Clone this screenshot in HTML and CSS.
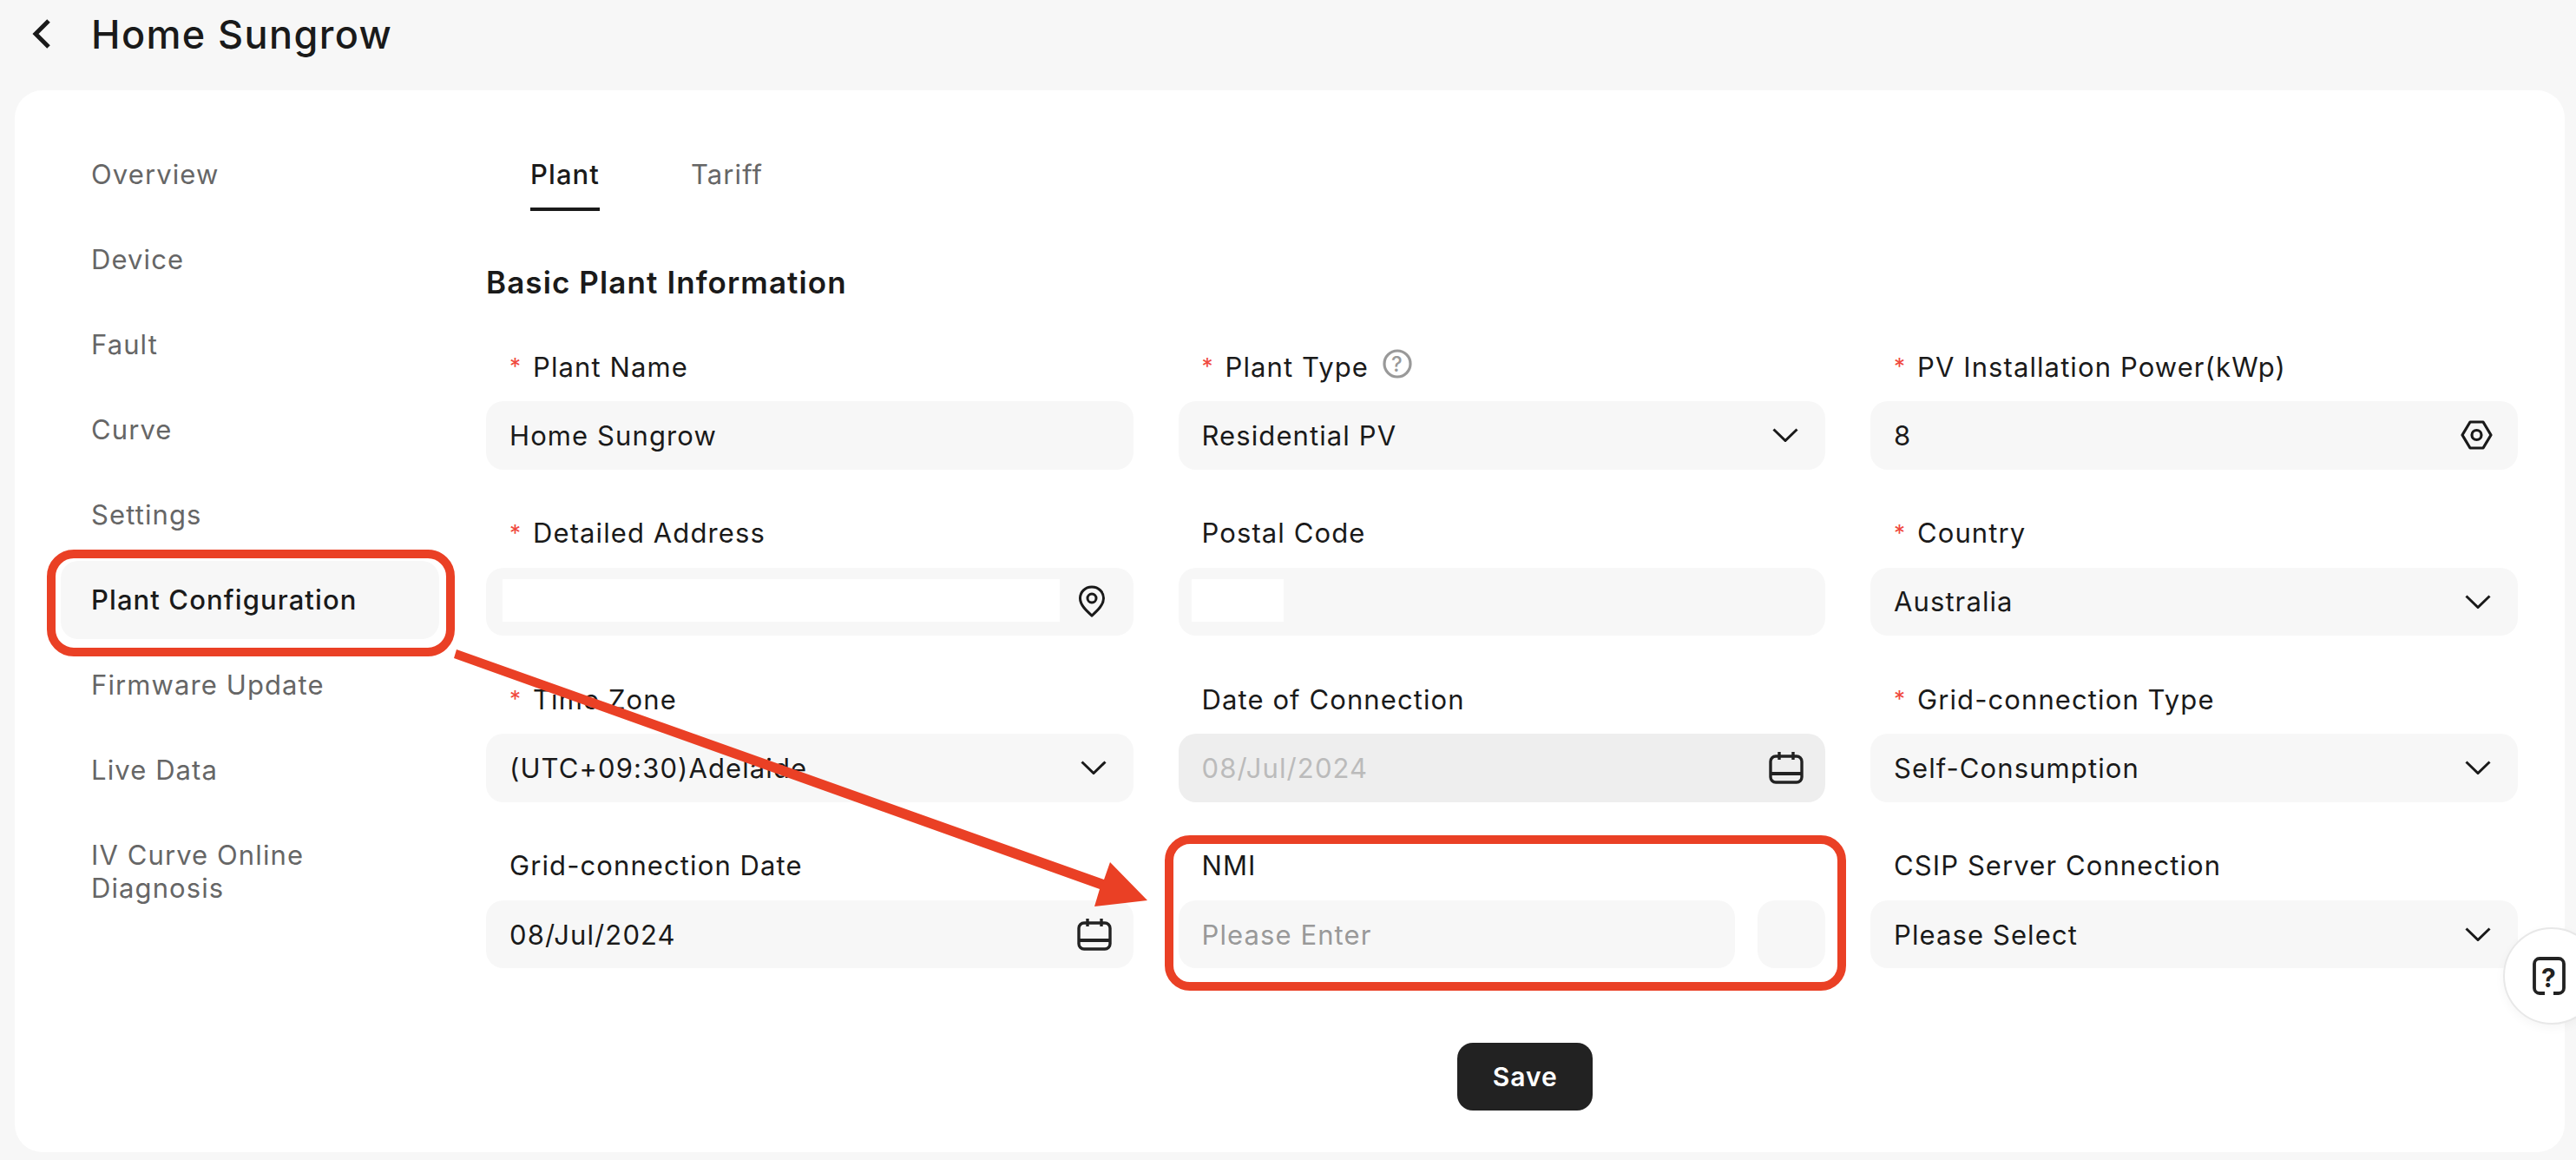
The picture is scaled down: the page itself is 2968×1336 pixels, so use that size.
FILE: index.html
```html
<!DOCTYPE html>
<html lang="en">
<head>
<meta charset="utf-8">
<title>Home Sungrow</title>
<link rel="stylesheet" href="styles.css">
</head>
<body>
<header class="topbar">
  <svg class="back" width="22" height="34" viewBox="0 0 22 34"><path d="M19 2 4 17l15 15" fill="none" stroke="#1a1a1a" stroke-width="5"/></svg>
  <h1 class="page-title">Home Sungrow</h1>
</header>
<main class="card">
  <nav class="sidebar">
    <a class="nav-item">Overview</a>
    <a class="nav-item">Device</a>
    <a class="nav-item">Fault</a>
    <a class="nav-item">Curve</a>
    <a class="nav-item">Settings</a>
    <a class="nav-item active">Plant Configuration</a>
    <a class="nav-item">Firmware Update</a>
    <a class="nav-item">Live Data</a>
    <a class="nav-item tall">IV Curve Online Diagnosis</a>
  </nav>
  <section class="content">
    <div class="tabs">
      <span class="tab selected">Plant</span>
      <span class="tab">Tariff</span>
    </div>
    <h2 class="section-title">Basic Plant Information</h2>
    <div class="form-grid">
      <div class="field">
        <label class="label"><i class="req">*</i>Plant Name</label>
        <div class="control"><span class="value">Home Sungrow</span></div>
      </div>
      <div class="field">
        <label class="label"><i class="req">*</i>Plant Type
          <svg class="hint" width="34" height="34" viewBox="0 0 34 34"><circle cx="17" cy="17" r="15" fill="none" stroke="#999" stroke-width="3.200"/><text x="17" y="25.500" text-anchor="middle" class="hint-mark">?</text></svg>
        </label>
        <div class="control"><span class="value">Residential PV</span>
          <svg class="chev" width="30" height="16" viewBox="0 0 30 16"><path d="M1.5 1.5 15 14.500 28.500 1.500" fill="none" stroke="#1a1a1a" stroke-width="3"/></svg>
        </div>
      </div>
      <div class="field">
        <label class="label"><i class="req">*</i>PV Installation Power(kWp)</label>
        <div class="control"><span class="value">8</span>
          <svg class="hex" width="37" height="36" viewBox="0 0 37 36"><path d="M11 3h15l9 15-9 15H11L2 18z" fill="none" stroke="#1a1a1a" stroke-width="3.200" stroke-linejoin="round"/><circle cx="18.500" cy="18" r="5.500" fill="none" stroke="#1a1a1a" stroke-width="3.200"/></svg>
        </div>
      </div>

      <div class="field">
        <label class="label"><i class="req">*</i>Detailed Address</label>
        <div class="control inset">
          <span class="redact grow"></span>
          <svg class="pin" width="34" height="37" viewBox="0 0 34 37"><path d="M17 2C9 2 3.500 8 3.500 15c0 8 7.500 14.500 13.500 20 6-5.500 13.500-12 13.500-20C30.500 8 25 2 17 2z" fill="none" stroke="#1a1a1a" stroke-width="3"/><circle cx="17" cy="15" r="5" fill="none" stroke="#1a1a1a" stroke-width="3"/></svg>
        </div>
      </div>
      <div class="field">
        <label class="label">Postal Code</label>
        <div class="control inset short"><span class="redact small"></span></div>
      </div>
      <div class="field">
        <label class="label"><i class="req">*</i>Country</label>
        <div class="control"><span class="value">Australia</span>
          <svg class="chev" width="30" height="16" viewBox="0 0 30 16"><path d="M1.5 1.5 15 14.500 28.500 1.500" fill="none" stroke="#1a1a1a" stroke-width="3"/></svg>
        </div>
      </div>

      <div class="field">
        <label class="label"><i class="req">*</i>Time Zone</label>
        <div class="control"><span class="value">(UTC+09:30)Adelaide</span>
          <svg class="chev" width="30" height="16" viewBox="0 0 30 16"><path d="M1.5 1.5 15 14.500 28.500 1.500" fill="none" stroke="#1a1a1a" stroke-width="3"/></svg>
        </div>
      </div>
      <div class="field">
        <label class="label">Date of Connection</label>
        <div class="control disabled"><span class="value">08/Jul/2024</span>
          <svg class="cal" width="40" height="37" viewBox="0 0 40 37"><rect x="2" y="5" width="36" height="30" rx="6" fill="none" stroke="#222" stroke-width="3.400"/><path d="M12 0v9M28 0v9" stroke="#222" stroke-width="3.400"/><path d="M2 25h36" stroke="#222" stroke-width="4"/></svg>
        </div>
      </div>
      <div class="field">
        <label class="label"><i class="req">*</i>Grid-connection Type</label>
        <div class="control"><span class="value">Self-Consumption</span>
          <svg class="chev" width="30" height="16" viewBox="0 0 30 16"><path d="M1.5 1.5 15 14.500 28.500 1.500" fill="none" stroke="#1a1a1a" stroke-width="3"/></svg>
        </div>
      </div>

      <div class="field">
        <label class="label">Grid-connection Date</label>
        <div class="control"><span class="value">08/Jul/2024</span>
          <svg class="cal" width="40" height="37" viewBox="0 0 40 37"><rect x="2" y="5" width="36" height="30" rx="6" fill="none" stroke="#222" stroke-width="3.400"/><path d="M12 0v9M28 0v9" stroke="#222" stroke-width="3.400"/><path d="M2 25h36" stroke="#222" stroke-width="4"/></svg>
        </div>
      </div>
      <div class="field">
        <label class="label">NMI</label>
        <div class="split">
          <div class="control main-part"><span class="value placeholder">Please Enter</span></div>
          <div class="control side-part"></div>
        </div>
      </div>
      <div class="field">
        <label class="label">CSIP Server Connection</label>
        <div class="control"><span class="value">Please Select</span>
          <svg class="chev" width="30" height="16" viewBox="0 0 30 16"><path d="M1.5 1.5 15 14.500 28.500 1.500" fill="none" stroke="#1a1a1a" stroke-width="3"/></svg>
        </div>
      </div>
    </div>
    <div class="actions"><button class="save">Save</button></div>
  </section>
</main>

<div class="help-bubble">
  <svg width="38" height="44" viewBox="0 0 38 44"><path d="M14 42H8a6 6 0 0 1-6-6V8a6 6 0 0 1 6-6h22a6 6 0 0 1 6 6v28a6 6 0 0 1-6 6h-6" fill="none" stroke="#222" stroke-width="3.800"/><text x="19" y="35" text-anchor="middle" class="help-mark">?</text></svg>
</div>

<svg class="annotations" width="2968" height="1336" viewBox="0 0 2968 1336">
  <rect x="59" y="638" width="460" height="113" rx="26" class="ring"/>
  <rect x="1347" y="967" width="775" height="169" rx="24" class="ring"/>
  <path d="M526 748 1272 1013 1279 993 1322 1037 1261 1044 1267 1024 523 758z" class="arrow"/>
</svg>
</body>
</html>
```

FILE: styles.css
```css
* { box-sizing: border-box; }
html, body { margin: 0; height: 100%; overflow: hidden; }
body {
  position: relative;
  background: #f7f7f7;
  font-family: Inter, "Noto Sans", sans-serif;
  color: #1a1a1a;
  width: 2968px;
  height: 1336px;
  letter-spacing: 1.1px;
}
.topbar {
  height: 104px;
  display: flex;
  align-items: flex-start;
  padding: 22px 0 0 37px;
  gap: 46px;
}
.back { flex: none; }
.page-title {
  margin: -6px 0 0;
  font-size: 45px;
  line-height: 48px;
  font-weight: 500;
  letter-spacing: 1.4px;
}
.card {
  margin: 0 13px 0 17px;
  height: 1223px;
  background: #fff;
  border-radius: 32px;
  display: flex;
  padding: 52px 55px 0 53px;
}
.sidebar {
  width: 436px;
  flex: none;
  display: flex;
  flex-direction: column;
  gap: 8px;
  font-size: 31px;
  color: #666;
}
.nav-item {
  min-height: 90px;
  padding: 26px 35px;
  line-height: 38px;
  border-radius: 20px;
}
.nav-item.active {
  background: #f7f7f7;
  color: #1a1a1a;
  font-weight: 500;
}
.content { flex: 1; margin-left: 54px; padding-top: 25px; }
.tabs { display: flex; gap: 105px; padding-left: 51px; font-size: 31px; }
.tab { color: #666; line-height: 40px; padding-bottom: 18px; }
.tab.selected { color: #1a1a1a; font-weight: 500; border-bottom: 4px solid #1a1a1a; }
.section-title {
  margin: 60px 0 0;
  font-size: 35px;
  line-height: 44px;
  font-weight: 600;
}
.form-grid {
  margin-top: 57px;
  display: grid;
  grid-template-columns: repeat(3, 745.5px);
  column-gap: 52px;
  row-gap: 55px;
}
.label {
  display: flex;
  align-items: center;
  height: 36px;
  margin-bottom: 22px;
  padding-left: 27px;
  font-size: 31px;
}
.req {
  font-style: normal;
  color: #f0493e;
  width: 27px;
  font-size: 26px;
  line-height: 26px;
  height: 26px;
}
.hint { margin-left: 16px; margin-top: -6px; }
.hint-mark { font-size: 24px; font-weight: 500; fill: #999; }
.control {
  height: 78.6px;
  background: #f7f7f7;
  border-radius: 20px;
  display: flex;
  align-items: center;
  justify-content: space-between;
  padding: 0 31px 0 27px;
  font-size: 31px;
}
.control.disabled { background: #eee; }
.control.disabled .value { color: #bbb; }
.control.inset { padding: 0 31px 0 19px; gap: 20px; }
.control.inset.short { padding-left: 15px; }
.redact { display: block; height: 49px; margin-bottom: 3px; background: #fff; }
.redact.grow { flex: 1; }
.redact.small { width: 106px; }
.placeholder { color: #999; }
.split { display: flex; gap: 26px; }
.main-part { flex: 1; }
.side-part { width: 78px; flex: none; }
.cal { margin-right: -6px; }
.hex { margin-right: -2px; }
.actions { margin-top: 85.600px; display: flex; justify-content: center; padding-left: 54px; }
.save {
  width: 156px;
  height: 78px;
  border: 0;
  border-radius: 18px;
  background: #222;
  color: #fff;
  font: 600 30px Inter, "Noto Sans", sans-serif;
  letter-spacing: 1px;
}
.help-bubble {
  position: absolute;
  left: 2884px;
  top: 1068px;
  width: 112px;
  height: 112px;
  border-radius: 50%;
  background: #fff;
  border: 2px solid #e8e8e8;
  box-shadow: 0 4px 12px rgba(0,0,0,.04);
  display: flex;
  align-items: center;
  padding-left: 32px;
}
.help-mark { font-size: 30px; font-weight: 700; fill: #222; }
.annotations { position: absolute; left: 0; top: 0; pointer-events: none; }
.ring { fill: none; stroke: #ea4025; stroke-width: 10; }
.arrow { fill: #ea4025; }
```
